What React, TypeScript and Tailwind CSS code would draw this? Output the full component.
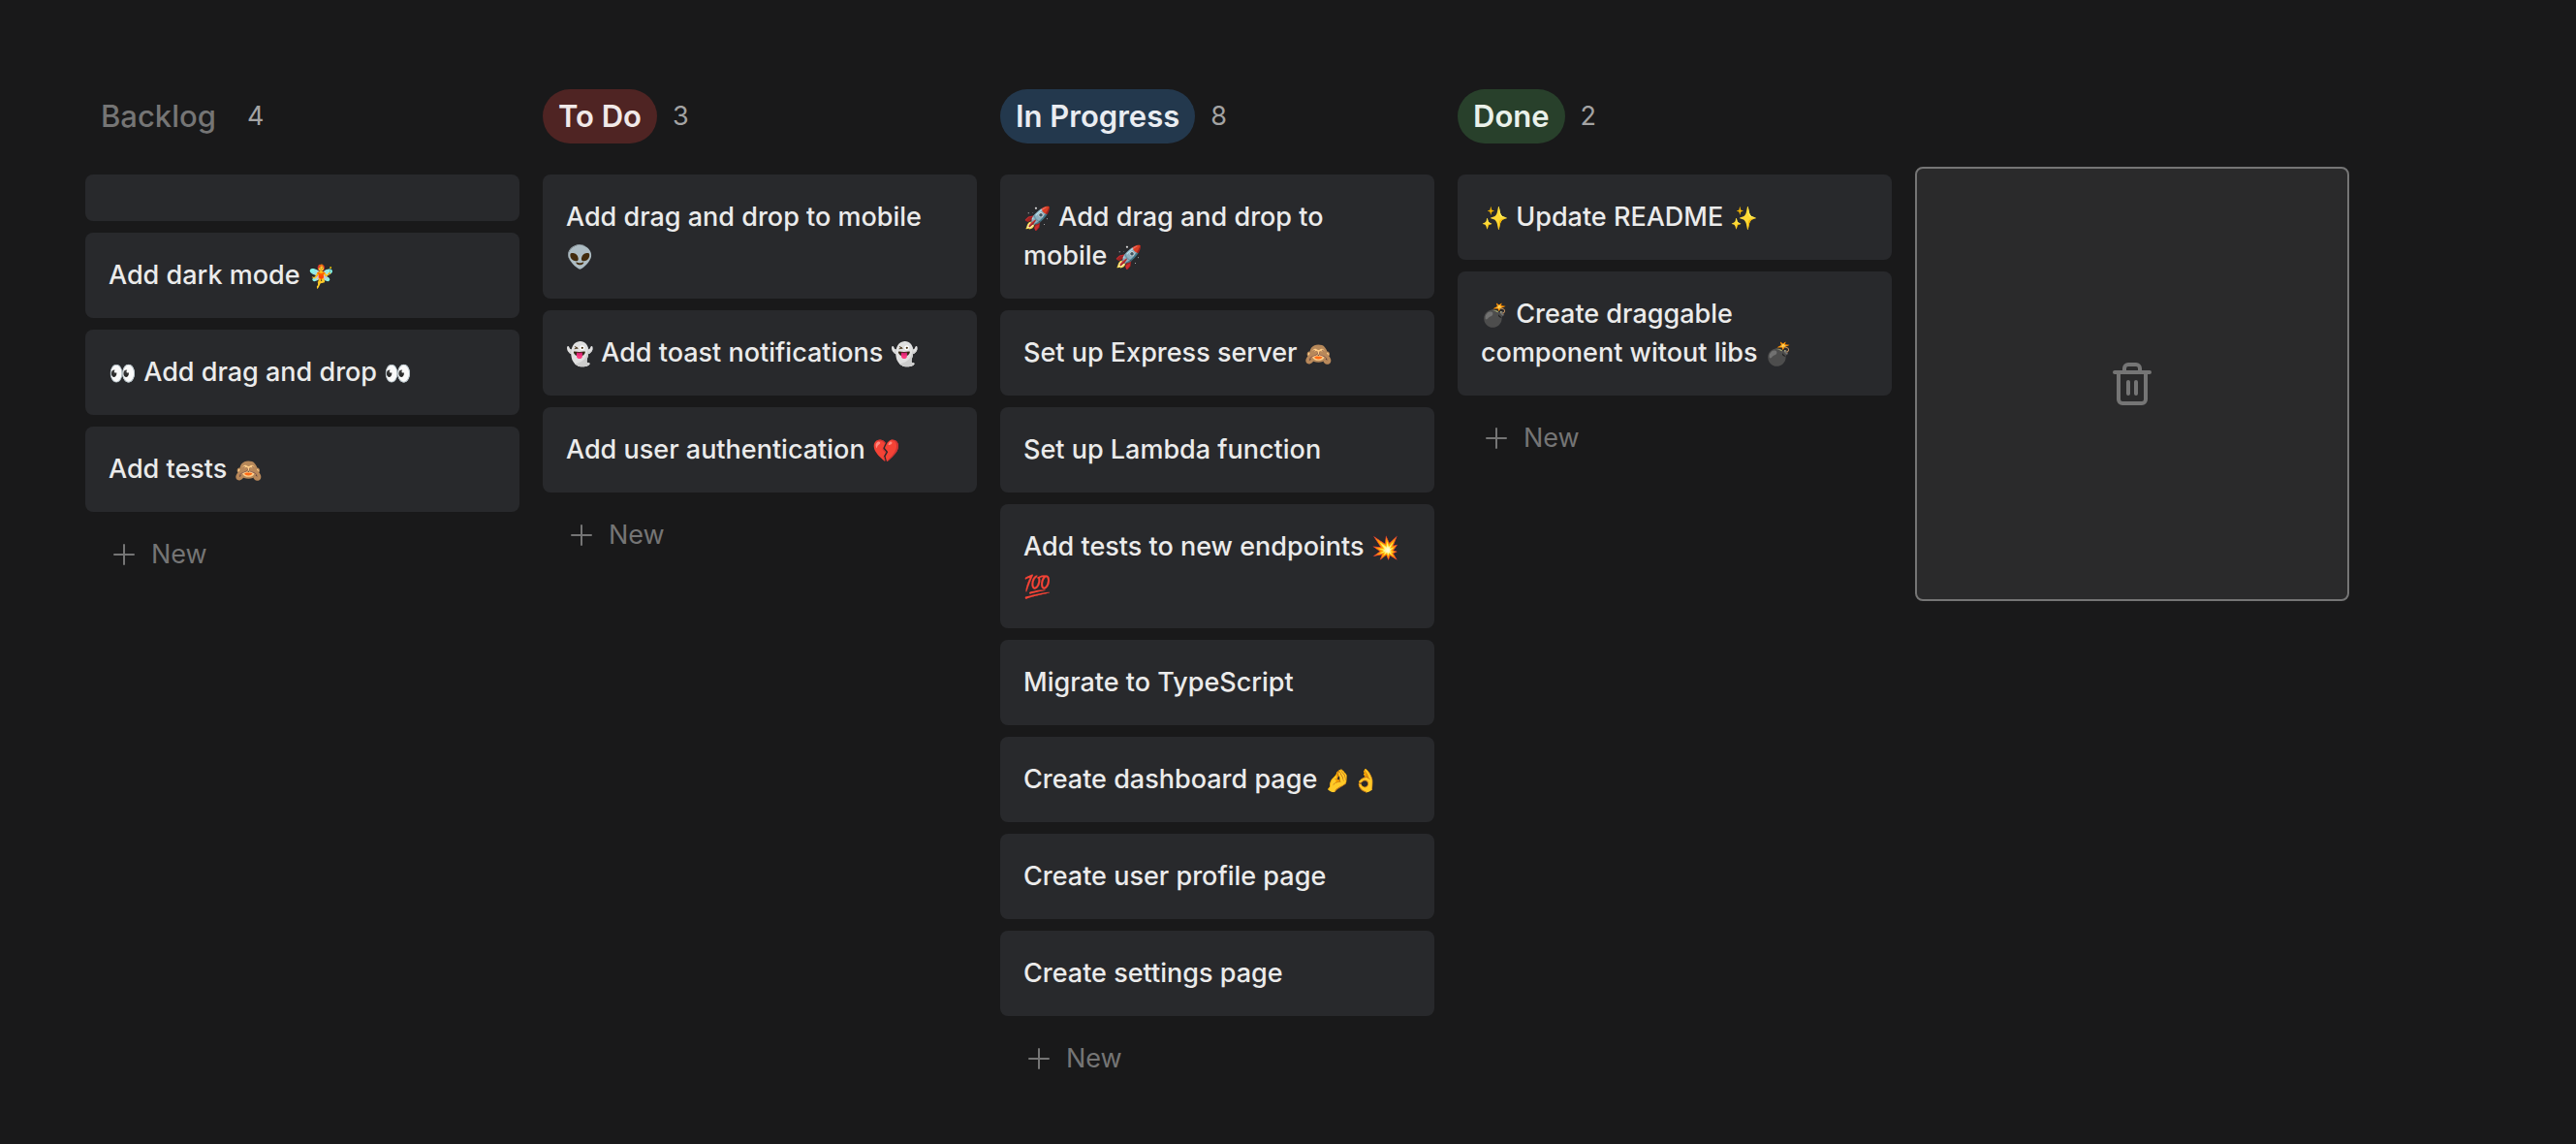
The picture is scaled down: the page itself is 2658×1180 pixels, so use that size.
import { Trash2 } from "lucide-react";

type Column = { name: string; pill: string; cards: string[] };

const columns: Column[] = [
  {
    name: "Backlog",
    pill: "text-[#757575] font-medium",
    cards: ["", "Add dark mode 🧚", "👀 Add drag and drop 👀", "Add tests 🙈"],
  },
  {
    name: "To Do",
    pill: "bg-[#4f2423] text-[#f1e9e8] font-semibold",
    cards: ["Add drag and drop to mobile 👽", "👻 Add toast notifications 👻", "Add user authentication 💔"],
  },
  {
    name: "In Progress",
    pill: "bg-[#23384d] text-[#e9ecf1] font-semibold",
    cards: [
      "🚀 Add drag and drop to mobile 🚀",
      "Set up Express server 🙈",
      "Set up Lambda function",
      "Add tests to new endpoints 💥💯",
      "Migrate to TypeScript",
      "Create dashboard page 🤌👌",
      "Create user profile page",
      "Create settings page",
    ],
  },
  {
    name: "Done",
    pill: "bg-[#28402b] text-[#eaf1ea] font-semibold",
    cards: ["✨ Update README ✨", "💣 Create draggable component witout libs 💣"],
  },
];

// Emoji are set a little smaller than the words around them.
function CardText({ text }: { text: string }) {
  return text.split(/(\p{Emoji_Presentation})/u).map((part, i) =>
    i % 2 === 1 ? (
      <span key={i} className="text-[23px] leading-none">
        {part}
      </span>
    ) : (
      part
    ),
  );
}

function PlusIcon() {
  return (
    <svg className="size-8" viewBox="0 0 24 24" fill="none" stroke="currentColor" strokeWidth="1.5" strokeLinecap="round" aria-hidden="true">
      <path d="M12 4.5v15m7.5-7.5h-15" />
    </svg>
  );
}

export default function App() {
  return (
    <main className="flex min-h-screen items-start gap-6 bg-[#19191a] px-[88px] pt-[92px] pb-12 font-[Inter,sans-serif] text-[27px] leading-10 text-[#ebebeb]">
      {columns.map((column) => (
        <section key={column.name} className="w-[448px] shrink-0">
          <header className="mb-8 flex h-14 items-center gap-4">
            <h2 className={`flex h-14 items-center rounded-full px-4 text-[31px] ${column.pill}`}>{column.name}</h2>
            <span className="text-[#a3a3a3]">{column.cards.length}</span>
          </header>
          <ul className="flex flex-col gap-3 font-medium">
            {column.cards.map((card, i) => (
              <li key={i} className="rounded-lg bg-[#28292c] p-6">
                <CardText text={card} />
              </li>
            ))}
          </ul>
          <button type="button" className="mt-6 flex items-center gap-3 px-6 text-[#757575]">
            <PlusIcon />
            New
          </button>
        </section>
      ))}
      <section
        aria-label="Delete card"
        className="mt-20 flex aspect-square w-[448px] shrink-0 items-center justify-center rounded-lg border-2 border-[#757575] bg-[#2a2a2b] text-[#757575]"
      >
        <Trash2 className="size-12" />
      </section>
    </main>
  );
}
